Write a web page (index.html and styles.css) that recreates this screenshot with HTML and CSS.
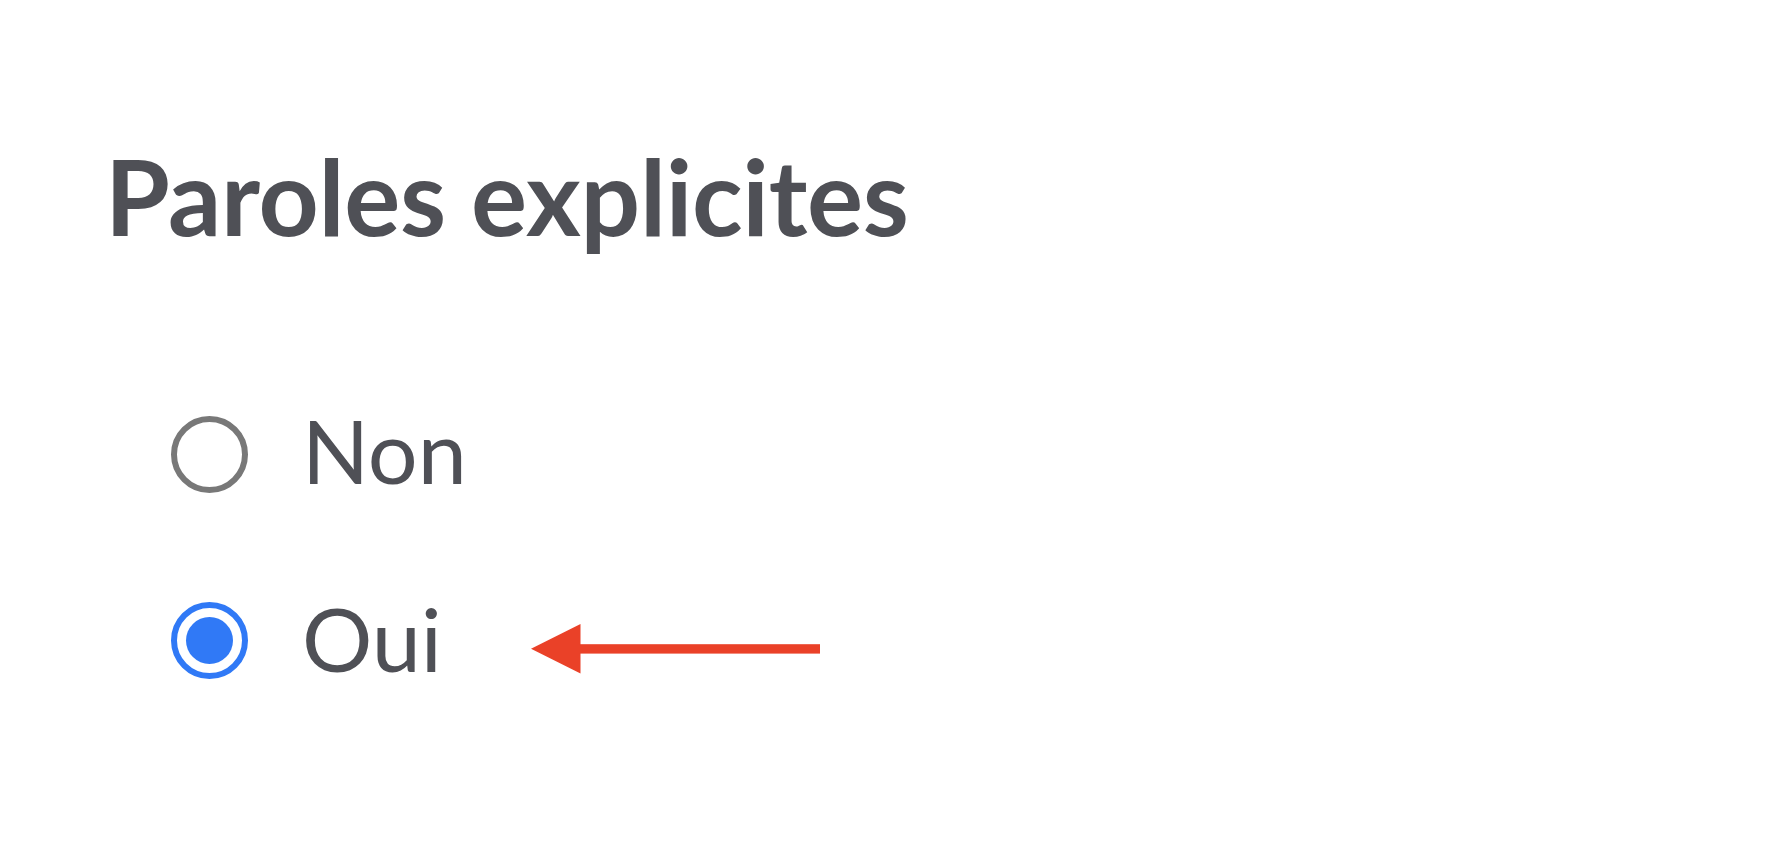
FILE: index.html
```html
<!DOCTYPE html>
<html lang="fr">
<head>
<meta charset="utf-8">
<title>Paroles explicites</title>
<link rel="stylesheet" href="styles.css">
</head>
<body>
<main class="page">
  <h1 class="title">Paroles explicites</h1>
  <div class="options">
    <label class="option">
      <span class="radio"></span>
      <span class="label">Non</span>
    </label>
    <label class="option">
      <span class="radio radio-checked"><span class="dot"></span></span>
      <span class="label">Oui</span>
      <svg class="arrow" width="290" height="50" viewBox="0 0 290 50" aria-hidden="true">
        <polygon points="0,24.8 49.5,0 49.5,49.6" fill="#ea4128"/>
        <rect x="48" y="20.2" width="241" height="9.4" fill="#ea4128"/>
      </svg>
    </label>
  </div>
</main>
</body>
</html>
```

FILE: styles.css
```css
html, body {
  margin: 0;
  padding: 0;
  background: #ffffff;
}

body {
  width: 1786px;
  height: 868px;
  overflow: hidden;
  font-family: Lato, "Noto Sans", sans-serif;
  color: #4f5056;
}

.page {
  display: flex;
  flex-direction: column;
  padding-top: 132px;
  padding-left: 105px;
}

.title {
  margin: 0;
  font-size: 105px;
  font-weight: 700;
  line-height: 1.2;
  letter-spacing: -0.3px;
}

.options {
  display: flex;
  flex-direction: column;
  gap: 82px;
  margin-top: 139px;
  padding-left: 66px;
}

.option {
  display: flex;
  align-items: flex-start;
  height: 106px;
}

.radio {
  box-sizing: border-box;
  width: 77px;
  height: 77px;
  border-radius: 50%;
  border: 6.5px solid #787878;
  margin-top: 19px;
  flex: none;
  display: flex;
  align-items: center;
  justify-content: center;
}

.radio-checked {
  border-color: #3079f6;
  margin-top: 17px;
}

.dot {
  width: 47px;
  height: 47px;
  border-radius: 50%;
  background: #3079f6;
}

.label {
  font-size: 88px;
  font-weight: 400;
  line-height: 1.2;
  margin-left: 54px;
  padding-top: 1px;
}

.option .label + .arrow {
  flex: none;
  margin-left: 89px;
  margin-top: 39px;
}
```
